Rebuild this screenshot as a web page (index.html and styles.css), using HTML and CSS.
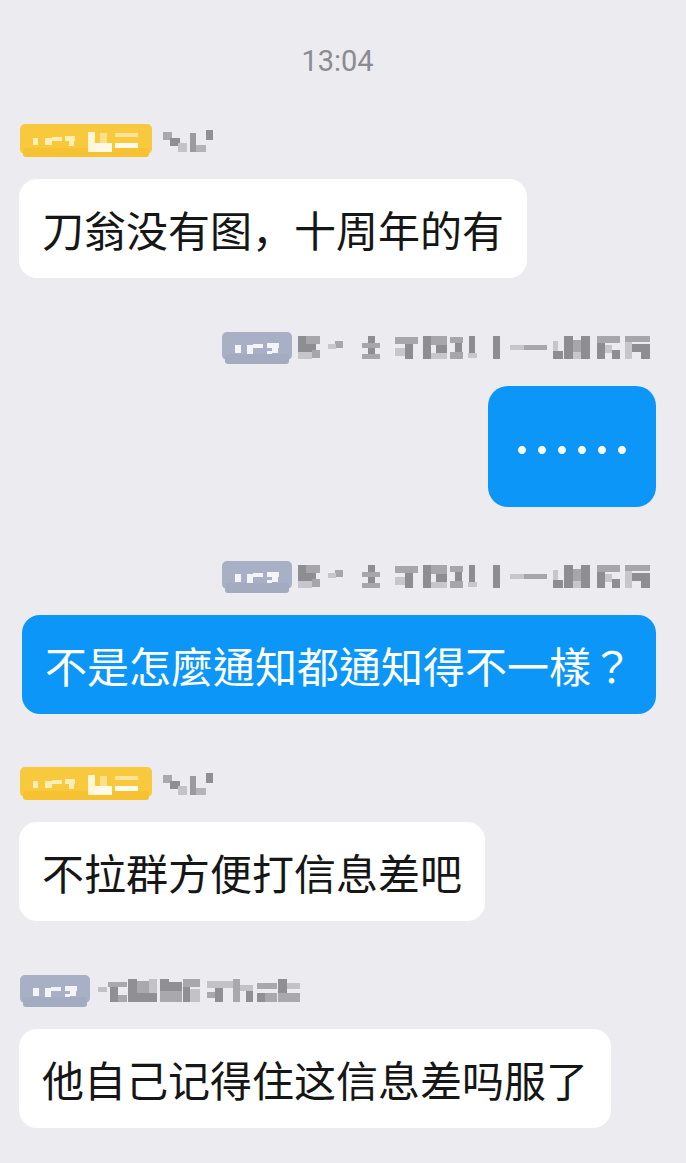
FILE: index.html
```html
<!DOCTYPE html>
<html lang="zh-CN">
<head>
<meta charset="utf-8">
<title>Chat</title>
<link rel="stylesheet" href="styles.css">
</head>
<body>
<main class="chat">
  <div class="time">13:04</div>

  <section class="msg msg-in">
    <div class="name-row">
      <svg class="badge" width="132" height="34" viewBox="0 0 132 34">
        <rect x="0" y="0" width="132" height="30" rx="5" fill="#f8c93c"/>
        <rect x="3" y="24" width="126" height="9" rx="3" fill="#f6c232"/>
        <g fill="#fdeeb8">
          <rect x="13" y="14" width="5" height="7"/>
          <rect x="25" y="14" width="7" height="7"/><rect x="32" y="13" width="10" height="4"/>
          <rect x="45" y="12" width="10" height="5"/><rect x="49" y="17" width="5" height="5"/>
        </g>
        <rect x="68" y="8" width="7" height="20" fill="#fff6d6"/>
        <rect x="75" y="19" width="17" height="9" fill="#fff9e6"/>
        <rect x="80" y="9" width="7" height="10" fill="#fbe08a"/>
        <rect x="95" y="9" width="23" height="4" fill="#fbe39a"/>
        <rect x="95" y="19" width="23" height="5" fill="#fffbed"/>
      </svg>
      <svg class="nick nick-short" width="50" height="24" viewBox="0 0 50 24">
        <rect x="0" y="3" width="9" height="8" fill="#a9a9ae"/>
        <rect x="7" y="9" width="10" height="8" fill="#8e8e93"/>
        <rect x="15" y="14" width="9" height="9" fill="#c4c4c8"/>
        <rect x="27" y="4" width="6" height="19" fill="#9a9a9f"/>
        <rect x="33" y="16" width="10" height="7" fill="#b4b4b8"/>
        <rect x="43" y="1" width="7" height="10" fill="#8f8f94"/>
      </svg>
    </div>
    <div class="bubble bubble-in">刀翁没有图，十周年的有</div>
  </section>

  <section class="msg msg-out">
    <div class="name-row">
      <svg class="badge" width="70" height="32" viewBox="0 0 70 32">
        <rect x="0" y="0" width="70" height="28" rx="5" fill="#a8b0c5"/>
        <rect x="3" y="22" width="64" height="10" rx="3" fill="#a3abc1"/>
        <g fill="#f3f4f8">
          <rect x="13" y="13" width="6" height="8"/>
          <rect x="25" y="13" width="6" height="9"/><rect x="31" y="12" width="10" height="4"/>
          <rect x="45" y="11" width="12" height="5"/><rect x="50" y="16" width="6" height="5"/><rect x="45" y="19" width="5" height="3"/>
        </g>
      </svg>
      <svg class="nick nick-long" width="352" height="24" viewBox="0 0 352 24">
        <g fill="#8d8d92">
          <rect x="0" y="0" width="8" height="16"/><rect x="8" y="8" width="10" height="8"/>
          <rect x="70" y="0" width="7" height="23"/>
          <rect x="107" y="8" width="8" height="15"/>
          <rect x="125" y="0" width="8" height="23"/><rect x="138" y="9" width="11" height="8"/>
          <rect x="157" y="7" width="7" height="9"/>
          <rect x="171" y="0" width="6" height="17"/>
          <rect x="195" y="0" width="7" height="23"/>
          <rect x="255" y="15" width="10" height="8"/>
          <rect x="266" y="0" width="9" height="23"/><rect x="283" y="0" width="9" height="23"/>
          <rect x="299" y="7" width="8" height="16"/><rect x="314" y="14" width="8" height="9"/>
          <rect x="334" y="8" width="9" height="8"/><rect x="343" y="8" width="9" height="15"/>
        </g>
        <g fill="#a6a6ab">
          <rect x="8" y="0" width="14" height="8"/><rect x="14" y="14" width="8" height="8"/>
          <rect x="37" y="5" width="8" height="7"/>
          <rect x="64" y="7" width="18" height="5"/><rect x="64" y="18" width="18" height="5"/>
          <rect x="97" y="1" width="23" height="7"/>
          <rect x="133" y="0" width="16" height="9"/>
          <rect x="152" y="1" width="13" height="6"/><rect x="152" y="16" width="13" height="7"/>
          <rect x="226" y="9" width="23" height="5"/>
          <rect x="275" y="4" width="8" height="12"/>
          <rect x="299" y="0" width="23" height="7"/>
          <rect x="327" y="0" width="25" height="6"/>
        </g>
        <g fill="#c6c6cb">
          <rect x="0" y="16" width="14" height="7"/>
          <rect x="30" y="8" width="8" height="5"/>
          <rect x="97" y="12" width="10" height="8"/>
          <rect x="133" y="17" width="16" height="6"/>
          <rect x="170" y="17" width="9" height="5"/>
          <rect x="212" y="9" width="14" height="5"/>
          <rect x="255" y="5" width="5" height="10"/>
          <rect x="275" y="16" width="8" height="7"/>
          <rect x="307" y="9" width="7" height="8"/>
          <rect x="327" y="6" width="7" height="17"/>
        </g>
      </svg>
    </div>
    <div class="bubble bubble-out bubble-dots">……</div>
  </section>

  <section class="msg msg-out">
    <div class="name-row">
      <svg class="badge" width="70" height="32" viewBox="0 0 70 32">
        <rect x="0" y="0" width="70" height="28" rx="5" fill="#a8b0c5"/>
        <rect x="3" y="22" width="64" height="10" rx="3" fill="#a3abc1"/>
        <g fill="#f3f4f8">
          <rect x="13" y="13" width="6" height="8"/>
          <rect x="25" y="13" width="6" height="9"/><rect x="31" y="12" width="10" height="4"/>
          <rect x="45" y="11" width="12" height="5"/><rect x="50" y="16" width="6" height="5"/><rect x="45" y="19" width="5" height="3"/>
        </g>
      </svg>
      <svg class="nick nick-long" width="352" height="24" viewBox="0 0 352 24">
        <g fill="#8d8d92">
          <rect x="0" y="0" width="8" height="16"/><rect x="8" y="8" width="10" height="8"/>
          <rect x="70" y="0" width="7" height="23"/>
          <rect x="107" y="8" width="8" height="15"/>
          <rect x="125" y="0" width="8" height="23"/><rect x="138" y="9" width="11" height="8"/>
          <rect x="157" y="7" width="7" height="9"/>
          <rect x="171" y="0" width="6" height="17"/>
          <rect x="195" y="0" width="7" height="23"/>
          <rect x="255" y="15" width="10" height="8"/>
          <rect x="266" y="0" width="9" height="23"/><rect x="283" y="0" width="9" height="23"/>
          <rect x="299" y="7" width="8" height="16"/><rect x="314" y="14" width="8" height="9"/>
          <rect x="334" y="8" width="9" height="8"/><rect x="343" y="8" width="9" height="15"/>
        </g>
        <g fill="#a6a6ab">
          <rect x="8" y="0" width="14" height="8"/><rect x="14" y="14" width="8" height="8"/>
          <rect x="37" y="5" width="8" height="7"/>
          <rect x="64" y="7" width="18" height="5"/><rect x="64" y="18" width="18" height="5"/>
          <rect x="97" y="1" width="23" height="7"/>
          <rect x="133" y="0" width="16" height="9"/>
          <rect x="152" y="1" width="13" height="6"/><rect x="152" y="16" width="13" height="7"/>
          <rect x="226" y="9" width="23" height="5"/>
          <rect x="275" y="4" width="8" height="12"/>
          <rect x="299" y="0" width="23" height="7"/>
          <rect x="327" y="0" width="25" height="6"/>
        </g>
        <g fill="#c6c6cb">
          <rect x="0" y="16" width="14" height="7"/>
          <rect x="30" y="8" width="8" height="5"/>
          <rect x="97" y="12" width="10" height="8"/>
          <rect x="133" y="17" width="16" height="6"/>
          <rect x="170" y="17" width="9" height="5"/>
          <rect x="212" y="9" width="14" height="5"/>
          <rect x="255" y="5" width="5" height="10"/>
          <rect x="275" y="16" width="8" height="7"/>
          <rect x="307" y="9" width="7" height="8"/>
          <rect x="327" y="6" width="7" height="17"/>
        </g>
      </svg>
    </div>
    <div class="bubble bubble-out bubble-tc" lang="zh-TW">不是怎麼通知都通知得不一樣？</div>
  </section>

  <section class="msg msg-in">
    <div class="name-row">
      <svg class="badge" width="132" height="34" viewBox="0 0 132 34">
        <rect x="0" y="0" width="132" height="30" rx="5" fill="#f8c93c"/>
        <rect x="3" y="24" width="126" height="9" rx="3" fill="#f6c232"/>
        <g fill="#fdeeb8">
          <rect x="13" y="14" width="5" height="7"/>
          <rect x="25" y="14" width="7" height="7"/><rect x="32" y="13" width="10" height="4"/>
          <rect x="45" y="12" width="10" height="5"/><rect x="49" y="17" width="5" height="5"/>
        </g>
        <rect x="68" y="8" width="7" height="20" fill="#fff6d6"/>
        <rect x="75" y="19" width="17" height="9" fill="#fff9e6"/>
        <rect x="80" y="9" width="7" height="10" fill="#fbe08a"/>
        <rect x="95" y="9" width="23" height="4" fill="#fbe39a"/>
        <rect x="95" y="19" width="23" height="5" fill="#fffbed"/>
      </svg>
      <svg class="nick nick-short" width="50" height="24" viewBox="0 0 50 24">
        <rect x="0" y="3" width="9" height="8" fill="#a9a9ae"/>
        <rect x="7" y="9" width="10" height="8" fill="#8e8e93"/>
        <rect x="15" y="14" width="9" height="9" fill="#c4c4c8"/>
        <rect x="27" y="4" width="6" height="19" fill="#9a9a9f"/>
        <rect x="33" y="16" width="10" height="7" fill="#b4b4b8"/>
        <rect x="43" y="1" width="7" height="10" fill="#8f8f94"/>
      </svg>
    </div>
    <div class="bubble bubble-in">不拉群方便打信息差吧</div>
  </section>

  <section class="msg msg-in">
    <div class="name-row">
      <svg class="badge" width="70" height="32" viewBox="0 0 70 32">
        <rect x="0" y="0" width="70" height="28" rx="5" fill="#a8b0c5"/>
        <rect x="3" y="22" width="64" height="10" rx="3" fill="#a3abc1"/>
        <g fill="#f3f4f8">
          <rect x="13" y="13" width="6" height="8"/>
          <rect x="25" y="13" width="6" height="9"/><rect x="31" y="12" width="10" height="4"/>
          <rect x="45" y="11" width="12" height="5"/><rect x="50" y="16" width="6" height="5"/><rect x="45" y="19" width="5" height="3"/>
        </g>
      </svg>
      <svg class="nick nick-mid" width="203" height="24" viewBox="0 0 203 24">
        <g fill="#c2c2c7">
          <rect x="1" y="8" width="9" height="5"/>
          <rect x="52" y="0" width="8" height="14"/>
          <rect x="93" y="10" width="10" height="13"/>
          <rect x="110" y="2" width="26" height="7"/>
          <rect x="143" y="6" width="13" height="6"/>
          <rect x="190" y="4" width="13" height="6"/>
        </g>
        <g fill="#a8a8ad">
          <rect x="11" y="3" width="19" height="5"/><rect x="21" y="16" width="9" height="7"/>
          <rect x="40" y="2" width="12" height="12"/>
          <rect x="63" y="12" width="22" height="11"/>
          <rect x="86" y="0" width="17" height="8"/>
          <rect x="110" y="13" width="8" height="6"/>
          <rect x="136" y="0" width="7" height="23"/>
          <rect x="160" y="4" width="20" height="6"/><rect x="168" y="14" width="12" height="9"/>
          <rect x="181" y="14" width="22" height="9"/>
        </g>
        <g fill="#8f8f94">
          <rect x="13" y="8" width="8" height="15"/>
          <rect x="31" y="0" width="9" height="23"/><rect x="40" y="14" width="20" height="9"/>
          <rect x="63" y="0" width="9" height="12"/><rect x="72" y="3" width="13" height="9"/>
          <rect x="86" y="8" width="7" height="15"/>
          <rect x="118" y="9" width="8" height="14"/>
          <rect x="149" y="12" width="7" height="11"/>
          <rect x="160" y="14" width="8" height="9"/>
          <rect x="181" y="0" width="9" height="14"/>
        </g>
      </svg>
    </div>
    <div class="bubble bubble-in">他自己记得住这信息差吗服了</div>
  </section>
</main>
</body>
</html>
```

FILE: styles.css
```css
* {
  box-sizing: border-box;
  margin: 0;
  padding: 0;
}

html,
body {
  background: #ebebf0;
}

body {
  width: 686px;
  min-height: 1163px;
  font-family: "Noto Sans CJK SC", "Noto Sans", sans-serif;
}

.chat {
  display: flex;
  flex-direction: column;
  padding: 44px 30px 0 19px;
}

.time {
  align-self: center;
  margin: 0 0 46px 0;
  font-family: Roboto, "Liberation Sans", sans-serif;
  font-size: 29px;
  line-height: 34px;
  color: #8b8b90;
}

.msg {
  display: flex;
  flex-direction: column;
  gap: 21px;
  margin-bottom: 53px;
}

.msg-in {
  align-items: flex-start;
}

.msg-out {
  align-items: flex-end;
}

.name-row {
  display: flex;
  align-items: center;
  height: 34px;
}

.msg-in .name-row {
  margin-left: 1px;
}

.msg-out .name-row {
  margin-right: 6px;
}

.badge,
.nick {
  display: block;
  flex: none;
}

.nick-short {
  margin-left: 11px;
}

.nick-long {
  margin-left: 6px;
}

.nick-mid {
  margin-left: 7px;
}

.bubble {
  font-size: 42px;
  line-height: 59px;
  padding: 20px 23px;
  border-radius: 18px;
  white-space: nowrap;
}

.bubble-in {
  background: #ffffff;
  color: #161616;
}

.bubble-out {
  background: #0b96f8;
  color: #ffffff;
}

.bubble-tc {
  font-family: "Noto Sans CJK TC", "Noto Sans CJK SC", sans-serif;
}

.bubble-dots {
  font-size: 60px;
  line-height: 81px;
  padding: 20px 24px;
  border-radius: 20px;
}
```
